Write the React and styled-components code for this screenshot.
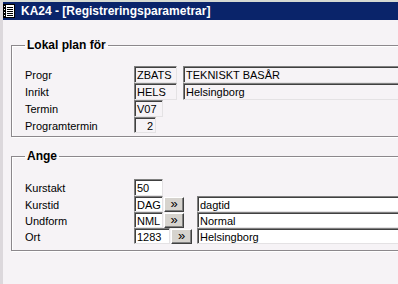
import React from 'react';
import styled, { createGlobalStyle } from 'styled-components';

const GlobalStyle = createGlobalStyle`
  html, body {
    margin: 0;
    padding: 0;
    background: #f6f3f6;
    overflow: hidden;
  }
`;

const Window = styled.div`
  width: 398px;
  height: 284px;
  overflow: hidden;
  box-sizing: border-box;
  background: #f6f3f6;
  border-top: 2px solid #d6dad2;
  border-left: 3px solid #dcd8dc;
  font-family: "Liberation Sans", Arial, sans-serif;
  color: #000;
`;

const TitleBar = styled.div`
  display: flex;
  align-items: center;
  gap: 6px;
  height: 18px;
  margin-left: -3px;
  padding-left: 3px;
  background: #0a246a;
  color: #fff;
  font-weight: bold;
  font-size: 12px;
  white-space: nowrap;
`;

const Body = styled.div`
  padding: 18px 0 0 8px;
`;

const Group = styled.fieldset`
  width: 430px;
  margin: 0 0 ${p => p.$gap || 0}px 0;
  padding: ${p => p.$top}px 0 ${p => p.$bottom}px 13px;
  border: 1px solid #8c888c;
  box-shadow: 1px 1px 0 #fff, inset 1px 1px 0 #fff;
  min-width: 0;
`;

const Legend = styled.legend`
  padding: 0 2px;
  margin-left: 0;
  font-size: 12px;
  font-weight: bold;
  line-height: 14px;
`;

const Rows = styled.div`
  display: flex;
  flex-direction: column;
`;

const Row = styled.div`
  display: flex;
  align-items: center;
  height: ${p => p.$h || 17}px;
`;

const Label = styled.div`
  width: 109px;
  font-size: 11px;
  line-height: 14px;
  padding-top: 1px;
`;

const CodeCell = styled.div`
  display: flex;
  align-items: center;
  gap: 1px;
  width: ${p => p.$w}px;
`;

const Field = styled.div`
  box-sizing: border-box;
  width: ${p => p.$w}px;
  height: ${p => p.$h || 17}px;
  padding: 1px 2px 0 2px;
  border: 1px solid;
  border-color: #808080 #e4e2e4 #e4e2e4 #808080;
  box-shadow: inset 1px 1px 0 #404040;
  background: ${p => (p.$white ? '#fff' : '#f6f3f6')};
  font-size: 11px;
  line-height: 14px;
  text-align: ${p => p.$align || 'left'};
  white-space: nowrap;
  overflow: hidden;
`;

const LookupButton = styled.div`
  box-sizing: border-box;
  display: flex;
  align-items: center;
  justify-content: center;
  width: ${p => p.$w || 20}px;
  height: 15px;
  background: #d6d3ce;
  border: 1px solid;
  border-color: #fff #404040 #404040 #fff;
  box-shadow: inset -1px -1px 0 #808080;
  font-size: 13px;
  line-height: 13px;
  padding-bottom: 2px;
`;

const AppIcon = () => (
  <svg width="12" height="14" viewBox="0 0 12 14">
    <rect x="0.5" y="0.5" width="11" height="13" fill="#fff" stroke="#000" />
    <rect x="0" y="0" width="3" height="14" fill="#000" />
    <rect x="1" y="2" width="1" height="1" fill="#fff" />
    <rect x="1" y="5" width="1" height="1" fill="#fff" />
    <rect x="1" y="8" width="1" height="1" fill="#fff" />
    <rect x="1" y="11" width="1" height="1" fill="#fff" />
    <path d="M4 3.5h6M4 5.5h6M4 7.5h6M4 9.5h6M4 11.5h6" stroke="#000" />
  </svg>
);

const lokalRows = [
  { label: 'Progr', code: 'ZBATS', w: 43, name: 'TEKNISKT BASÅR' },
  { label: 'Inrikt', code: 'HELS', w: 43, name: 'Helsingborg' },
  { label: 'Termin', code: 'V07', w: 29 },
  { label: 'Programtermin', code: '2', w: 22, align: 'right', h: 16 },
];

const angeRows = [
  { label: 'Kurstakt', code: '50', w: 29 },
  { label: 'Kurstid', code: 'DAG', w: 29, name: 'dagtid', btn: true, h: 16 },
  { label: 'Undform', code: 'NML', w: 29, name: 'Normal', btn: true, h: 16 },
  { label: 'Ort', code: '1283', w: 36, name: 'Helsingborg', btn: true, h: 16 },
];

const App = () => (
  <>
    <GlobalStyle />
    <Window>
      <TitleBar>
        <AppIcon />
        KA24 - [Registreringsparametrar]
      </TitleBar>
      <Body>
        <Group $top={14} $bottom={3} $gap={12}>
          <Legend>Lokal plan för</Legend>
          <Rows>
            {lokalRows.map(r => (
              <Row key={r.label} $h={r.h}>
                <Label>{r.label}</Label>
                <CodeCell $w={49}>
                  <Field $w={r.w} $h={r.h} $align={r.align}>{r.code}</Field>
                </CodeCell>
                {r.name && <Field $w={240} $h={r.h}>{r.name}</Field>}
              </Row>
            ))}
          </Rows>
        </Group>
        <Group $top={16} $bottom={6}>
          <Legend>Ange</Legend>
          <Rows>
            {angeRows.map(r => (
              <Row key={r.label} $h={r.h}>
                <Label>{r.label}</Label>
                <CodeCell $w={63}>
                  <Field $w={r.w} $h={r.h} $white>{r.code}</Field>
                  {r.btn && <LookupButton $w={r.code === '1283' ? 21 : 20}>»</LookupButton>}
                </CodeCell>
                {r.name && <Field $w={230} $h={r.h} $white>{r.name}</Field>}
              </Row>
            ))}
          </Rows>
        </Group>
      </Body>
    </Window>
  </>
);

export default App;
